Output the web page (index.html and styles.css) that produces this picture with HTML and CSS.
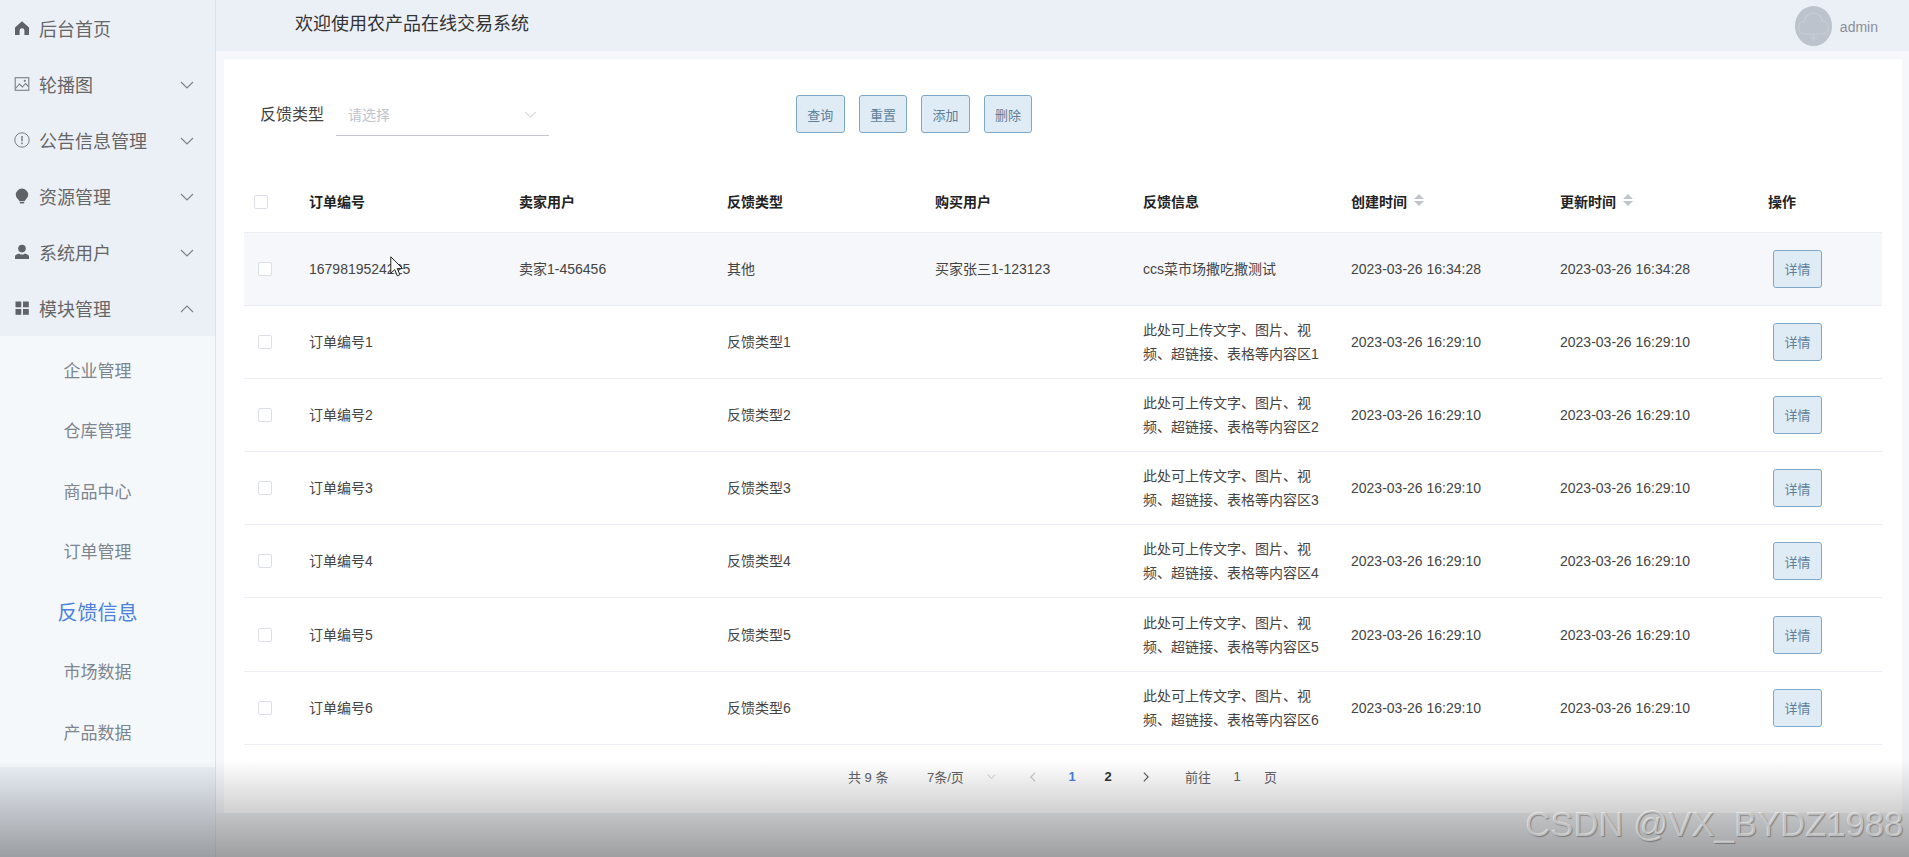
FILE: index.html
```html
<!DOCTYPE html>
<html lang="zh-CN">
<head>
<meta charset="utf-8">
<title>农产品在线交易系统</title>
<link rel="stylesheet" href="styles.css">
</head>
<body>
<div class="app">
  <aside class="sidebar">
    <div class="menu-item">
      <svg class="menu-icon" viewBox="0 0 16 16"><path fill="#5f6368" d="M8 1.2 15 7.4V15h-4.600v-4.400a2.400 2.400 0 0 0-4.800 0V15H1V7.400z"/></svg>
      <span class="menu-title">后台首页</span>
    </div>
    <div class="menu-item">
      <svg class="menu-icon" viewBox="0 0 16 16" fill="none" stroke="#7a7e83" stroke-width="1.100"><rect x="1.200" y="1.700" width="13.600" height="12.600"/><path d="M1.500 12.500 5.500 8l3 3 3-3.500 3 3"/><circle cx="10.800" cy="4.800" r=".6"/></svg>
      <span class="menu-title">轮播图</span>
      <svg class="chev" viewBox="0 0 14 8"><path d="M1 1l6 6 6-6"/></svg>
    </div>
    <div class="menu-item">
      <svg class="menu-icon" viewBox="0 0 16 16" fill="none" stroke="#7a7e83" stroke-width="1"><circle cx="8" cy="8" r="7.200"/><path stroke-width="1.500" d="M8 4v5.200M8 10.600v1.600"/></svg>
      <span class="menu-title">公告信息管理</span>
      <svg class="chev" viewBox="0 0 14 8"><path d="M1 1l6 6 6-6"/></svg>
    </div>
    <div class="menu-item">
      <svg class="menu-icon" viewBox="0 0 16 16"><path fill="#5f6368" d="M8 .6a6.200 6.200 0 0 1 6.200 6.200c0 2.600-2 4-3 5.400-.3.5-.5.8-.6 1H5.400c-.1-.2-.3-.5-.6-1-1-1.400-3-2.800-3-5.400A6.200 6.200 0 0 1 8 .6z"/><rect x="5.800" y="14" width="4.400" height="1.400" fill="#5f6368"/></svg>
      <span class="menu-title">资源管理</span>
      <svg class="chev" viewBox="0 0 14 8"><path d="M1 1l6 6 6-6"/></svg>
    </div>
    <div class="menu-item">
      <svg class="menu-icon" viewBox="0 0 16 16"><circle cx="8" cy="4.600" r="3.800" fill="#5f6368"/><path fill="#5f6368" d="M1 15v-2.400c0-1.500 2-2.500 4.200-3.200.8.800 1.700 1.200 2.800 1.200s2-.4 2.800-1.200c2.200.7 4.200 1.700 4.200 3.200V15z"/></svg>
      <span class="menu-title">系统用户</span>
      <svg class="chev" viewBox="0 0 14 8"><path d="M1 1l6 6 6-6"/></svg>
    </div>
    <div class="menu-item">
      <svg class="menu-icon" viewBox="0 0 16 16" fill="#5f6368"><rect x="1.500" y="1.500" width="5.800" height="5.800"/><rect x="9" y="1.500" width="5.800" height="5.800"/><rect x="1.500" y="9" width="5.800" height="5.800"/><rect x="9" y="9" width="5.800" height="5.800"/></svg>
      <span class="menu-title">模块管理</span>
      <svg class="chev" viewBox="0 0 14 8"><path d="M1 7l6-6 6 6"/></svg>
    </div>
    <div class="submenu">
      <div class="sub-item">企业管理</div>
      <div class="sub-item">仓库管理</div>
      <div class="sub-item">商品中心</div>
      <div class="sub-item">订单管理</div>
      <div class="sub-item sub-active">反馈信息</div>
      <div class="sub-item">市场数据</div>
      <div class="sub-item">产品数据</div>
    </div>
  </aside>

  <div class="main">
    <header class="topbar">
      <div class="welcome">欢迎使用农产品在线交易系统</div>
      <div class="user">
        <svg class="avatar" viewBox="0 0 37 40"><ellipse cx="18.500" cy="20" rx="18.500" ry="20" fill="#bdc3cc"/><path fill="none" stroke="#c9ced5" stroke-width="1.200" d="M10 28c-4 0-6.500-3-6.500-6.500S6 15.500 9.500 15.500C10 10.500 14 7 18.500 7s8.500 3.500 9 8.500c3.500 0 6 2.500 6 6S31 28 27 28zM18.500 28v7M15 32h7"/></svg>
        <span class="user-name">admin</span>
      </div>
    </header>

    <div class="content">
      <section class="card">
        <div class="filter">
          <label class="filter-label">反馈类型</label>
          <div class="select">
            <span class="placeholder">请选择</span>
            <svg class="select-arrow" viewBox="0 0 14 8"><path d="M1 1l6 6 6-6"/></svg>
          </div>
          <div class="actions">
            <button class="btn">查询</button>
            <button class="btn">重置</button>
            <button class="btn">添加</button>
            <button class="btn">删除</button>
          </div>
        </div>

        <table class="grid">
          <colgroup>
            <col class="col-check"><col class="col-order"><col class="col-std"><col class="col-std"><col class="col-std"><col class="col-std"><col class="col-wide"><col class="col-std"><col class="col-last">
          </colgroup>
          <thead>
            <tr>
              <th><span class="check check-head"></span></th>
              <th>订单编号</th>
              <th>卖家用户</th>
              <th>反馈类型</th>
              <th>购买用户</th>
              <th>反馈信息</th>
              <th>创建时间<svg class="sort" viewBox="0 0 10 12"><path d="M5 0l5 5H0zM0 7h10l-5 5z"/></svg></th>
              <th>更新时间<svg class="sort" viewBox="0 0 10 12"><path d="M5 0l5 5H0zM0 7h10l-5 5z"/></svg></th>
              <th>操作</th>
            </tr>
          </thead>
          <tbody>
            <tr class="row-hover">
              <td><span class="check"></span></td>
              <td>1679819524225</td>
              <td>卖家1-456456</td>
              <td>其他</td>
              <td>买家张三1-123123</td>
              <td><div class="info">ccs菜市场撒吃撒测试</div></td>
              <td>2023-03-26 16:34:28</td>
              <td>2023-03-26 16:34:28</td>
              <td><button class="btn btn-row">详情</button></td>
            </tr>
            <tr>
              <td><span class="check"></span></td>
              <td>订单编号1</td><td></td><td>反馈类型1</td><td></td>
              <td><div class="info">此处可上传文字、图片、视频、超链接、表格等内容区1</div></td>
              <td>2023-03-26 16:29:10</td><td>2023-03-26 16:29:10</td>
              <td><button class="btn btn-row">详情</button></td>
            </tr>
            <tr>
              <td><span class="check"></span></td>
              <td>订单编号2</td><td></td><td>反馈类型2</td><td></td>
              <td><div class="info">此处可上传文字、图片、视频、超链接、表格等内容区2</div></td>
              <td>2023-03-26 16:29:10</td><td>2023-03-26 16:29:10</td>
              <td><button class="btn btn-row">详情</button></td>
            </tr>
            <tr>
              <td><span class="check"></span></td>
              <td>订单编号3</td><td></td><td>反馈类型3</td><td></td>
              <td><div class="info">此处可上传文字、图片、视频、超链接、表格等内容区3</div></td>
              <td>2023-03-26 16:29:10</td><td>2023-03-26 16:29:10</td>
              <td><button class="btn btn-row">详情</button></td>
            </tr>
            <tr>
              <td><span class="check"></span></td>
              <td>订单编号4</td><td></td><td>反馈类型4</td><td></td>
              <td><div class="info">此处可上传文字、图片、视频、超链接、表格等内容区4</div></td>
              <td>2023-03-26 16:29:10</td><td>2023-03-26 16:29:10</td>
              <td><button class="btn btn-row">详情</button></td>
            </tr>
            <tr>
              <td><span class="check"></span></td>
              <td>订单编号5</td><td></td><td>反馈类型5</td><td></td>
              <td><div class="info">此处可上传文字、图片、视频、超链接、表格等内容区5</div></td>
              <td>2023-03-26 16:29:10</td><td>2023-03-26 16:29:10</td>
              <td><button class="btn btn-row">详情</button></td>
            </tr>
            <tr>
              <td><span class="check"></span></td>
              <td>订单编号6</td><td></td><td>反馈类型6</td><td></td>
              <td><div class="info">此处可上传文字、图片、视频、超链接、表格等内容区6</div></td>
              <td>2023-03-26 16:29:10</td><td>2023-03-26 16:29:10</td>
              <td><button class="btn btn-row">详情</button></td>
            </tr>
          </tbody>
        </table>

        <nav class="pager">
          <span class="pg-total">共 9 条</span>
          <span class="pg-size">7条/页<svg class="pg-arrow" viewBox="0 0 14 8"><path d="M1 1l6 6 6-6"/></svg></span>
          <span class="pg-btn pg-prev"><svg class="pg-nav" viewBox="0 0 8 14"><path d="M7 1L1 7l6 6"/></svg></span>
          <span class="pg-btn pg-current">1</span>
          <span class="pg-btn pg-num">2</span>
          <span class="pg-btn pg-next"><svg class="pg-nav pg-nav-on" viewBox="0 0 8 14"><path d="M1 1l6 6-6 6"/></svg></span>
          <span class="pg-goto">前往</span>
          <span class="pg-input">1</span>
          <span class="pg-unit">页</span>
        </nav>
      </section>
      <div class="content-foot"></div>
    </div>
  </div>
</div>

<svg class="cursor" viewBox="0 0 13 21"><path fill="#fff" stroke="#222" stroke-width="1" d="M.8.8v16.400l3.900-3.600 2.600 6.200 2.600-1.100-2.600-6.100h5.300z"/></svg>
<div class="player-shade"></div>
<div class="watermark">CSDN @VX_BYDZ1988</div>
</body>
</html>
```
FILE: styles.css
```css
* { box-sizing: border-box; }
html, body { margin: 0; height: 100%; overflow: hidden; }
body {
  font-family: "Liberation Sans", "Noto Sans CJK SC", sans-serif;
  font-size: 14px;
  color: #444;
  background: #f5f7fa;
}
.app { display: flex; height: 857px; }

/* sidebar */
.sidebar {
  width: 216px;
  flex: none;
  background: #ebf0f7;
  border-right: 1px solid #dfe3e8;
}
.menu-item {
  display: flex;
  align-items: center;
  height: 56px;
  padding: 0 21px 0 14px;
  color: #666;
  font-size: 18px;
}
.menu-icon { width: 16px; height: 16px; flex: none; margin-right: 9px; }
.menu-title { flex: 1; margin-top: -1px; }
.chev { width: 14px; height: 8px; flex: none; fill: none; stroke: #7d8085; stroke-width: 1.1; margin-top: 2px; }
.submenu { background: #f5f8fb; padding: 6px 0 3px; }
.sub-item {
  height: 60.3px;
  line-height: 60px;
  text-align: center;
  font-size: 17px;
  color: #7d858e;
  padding-right: 20px;
}
.sub-active { font-size: 20px; color: #4b82dc; }

/* header */
.main { flex: 1; min-width: 0; display: flex; flex-direction: column; }
.topbar {
  height: 51px;
  flex: none;
  background: #ebf0f7;
  display: flex;
  align-items: center;
  justify-content: space-between;
  padding: 0 31px 0 79px;
}
.welcome { font-size: 18px; color: #333; margin-top: -7px; }
.user { display: flex; align-items: center; gap: 8px; }
.avatar { width: 37px; height: 40px; }
.user-name { color: #8a8f96; font-size: 14px; padding-top: 3px; }

/* content */
.content { flex: 1; display: flex; flex-direction: column; padding: 8px 7px 0 8px; min-height: 0; }
.card { height: 754px; flex: none; background: #fff; padding: 36px 20px 0; }
.content-foot { flex: 1; margin: 0 -7px 0 -8px; background: #f0f1f3; }

.filter { display: flex; align-items: flex-start; height: 41px; padding-left: 16px; }
.filter-label { width: 64px; font-size: 16px; line-height: 40px; color: #444; margin-right: 12px; }
.select {
  width: 213px;
  height: 41px;
  border-bottom: 1px solid #c3c7cd;
  padding: 0 12px 2px;
  display: flex;
  align-items: center;
  justify-content: space-between;
}
.placeholder { color: #c0c4cc; font-size: 14px; }
.select-arrow { width: 13px; height: 7px; fill: none; stroke: #c0c4cc; stroke-width: 1.1; }
.actions { display: flex; gap: 14px; margin-left: 247px; }
.btn {
  width: 48.6px;
  height: 38px;
  padding: 0;
  background: #e0ecf5;
  border: 1px solid #7fa8c8;
  border-radius: 3px;
  color: #5f7f99;
  font: 13px "Liberation Sans", "Noto Sans CJK SC", sans-serif;
}
.btn-row { width: 49px; margin-left: 5px; display: block; }

/* table */
.grid { width: 1638px; table-layout: fixed; border-collapse: collapse; margin-top: 36px; }
.col-check { width: 65px; }
.col-order { width: 210px; }
.col-std { width: 208px; }
.col-wide { width: 209px; }
.col-last { width: 114px; }
.grid th {
  height: 60px;
  padding: 1px 0 0;
  text-align: left;
  font-size: 14px;
  font-weight: 700;
  color: #222;
  line-height: 20px;
  border-bottom: 1px solid #ebeef5;
}
.grid td {
  height: 73.2px;
  padding: 0;
  font-size: 14px;
  color: #444;
  line-height: 20px;
  border-bottom: 1px solid #ebeef5;
}
.row-hover td { background: #f5f7fa; }
.check {
  display: block;
  width: 14px;
  height: 14px;
  margin-left: 14px;
  background: #fff;
  border: 1px solid #dcdfe6;
  border-radius: 2px;
}
.check-head { margin-left: 10px; }
.info { width: 180px; line-height: 24px; }
.sort { width: 10px; height: 12px; fill: #c0c4cc; margin-left: 7px; vertical-align: 1px; }

/* pagination */
.pager {
  display: flex;
  align-items: center;
  height: 32px;
  margin-top: 16px;
  padding-left: 604px;
  font-size: 13px;
  color: #606266;
}
.pg-total { width: 79px; flex: none; }
.pg-size { width: 88px; flex: none; display: flex; align-items: center; }
.pg-arrow { width: 9px; height: 5px; margin-left: 23px; fill: none; stroke: #c0c4cc; stroke-width: 1.4; }
.pg-btn { width: 36px; flex: none; text-align: center; font-weight: 700; display: flex; align-items: center; justify-content: center; }
.pg-prev { margin-right: 3px; }
.pg-next { margin-left: 2px; }
.pg-current { color: #4b82dc; }
.pg-num { color: #303133; }
.pg-nav { width: 6px; height: 10px; fill: none; stroke: #c0c4cc; stroke-width: 1.5; }
.pg-nav-on { stroke: #555; }
.pg-goto { margin-left: 21px; }
.pg-input { width: 32px; margin-left: 10px; text-align: center; }
.pg-unit { margin-left: 11px; }

/* overlays captured with the video frame */
.cursor { position: absolute; left: 390px; top: 256px; width: 13px; height: 21px; }
.player-shade {
  position: absolute;
  left: 0;
  right: 0;
  top: 760px;
  height: 97px;
  pointer-events: none;
  background: linear-gradient(to bottom, rgba(0,0,0,0), rgba(0,0,0,.34));
}
.watermark {
  position: absolute;
  left: 1525px;
  top: 803px;
  font-size: 34.7px;
  line-height: 42px;
  white-space: nowrap;
  color: rgba(255,255,255,.5);
  text-shadow: 1px 1px 1px rgba(0,0,0,.3);
}
```
